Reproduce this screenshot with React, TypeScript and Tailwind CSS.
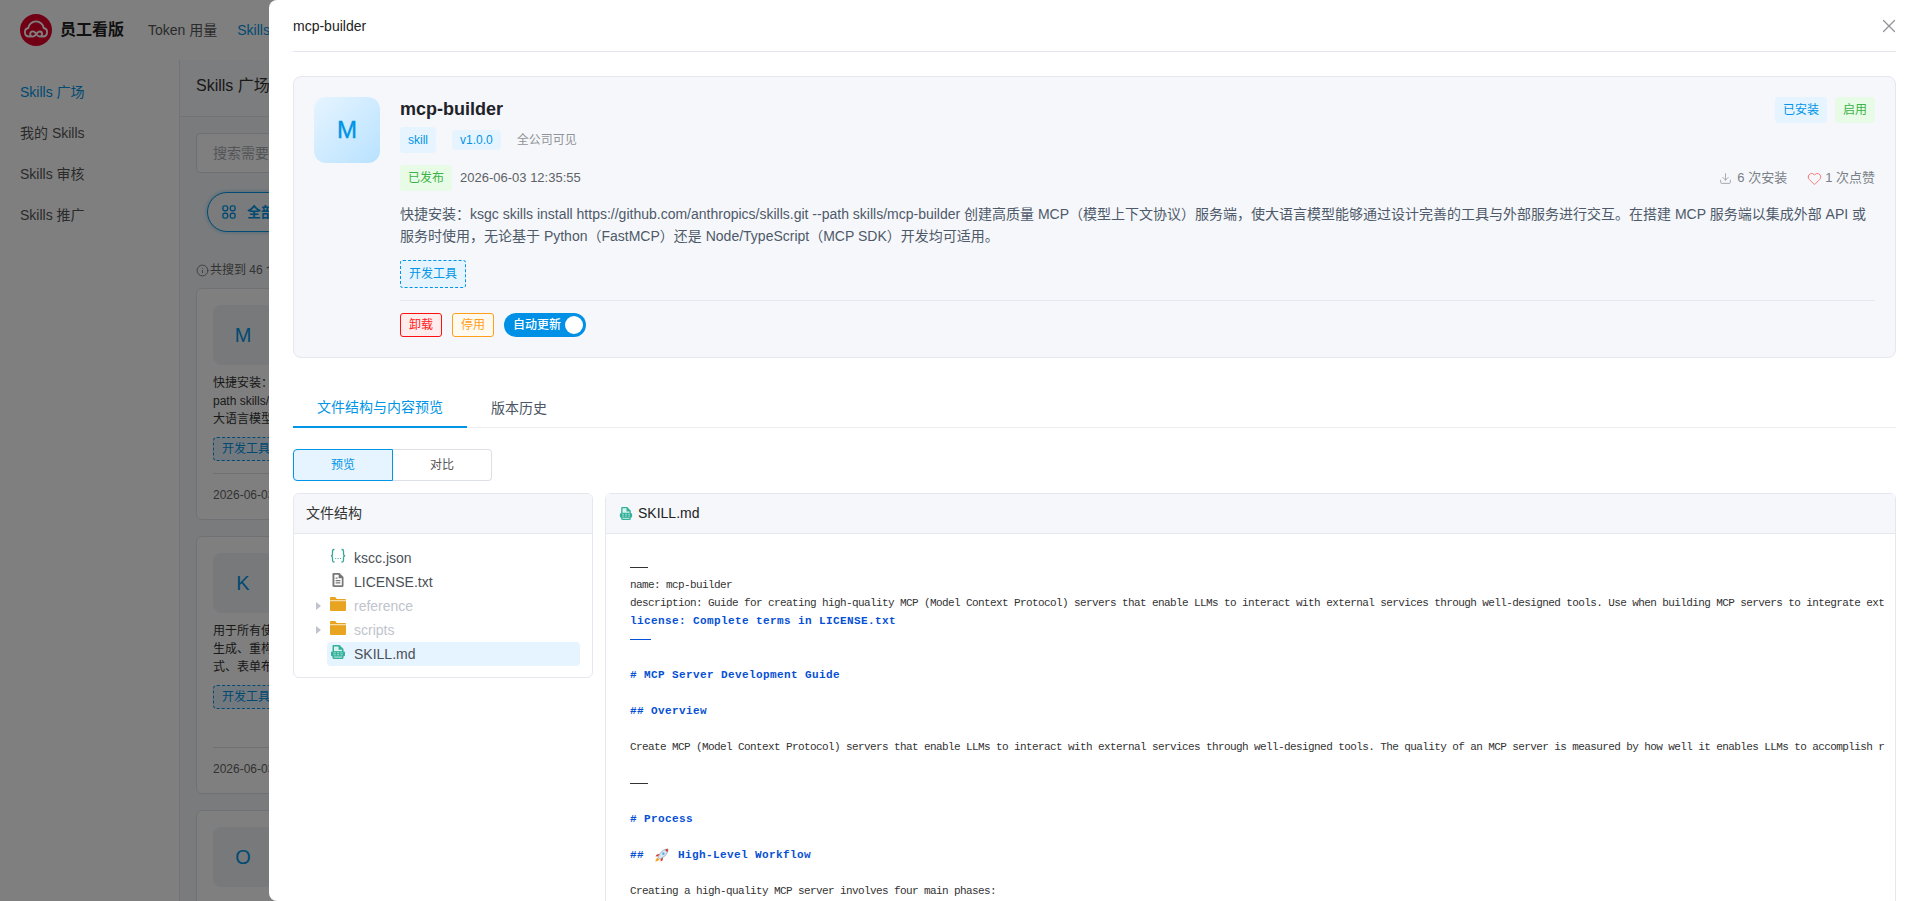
import type { ReactNode } from "react";
import { Download, Heart, Info, X } from "lucide-react";

const fontSans =
  "font-['Liberation_Sans','Noto_Sans_CJK_SC',sans-serif]";

const sideItems = ["Skills 广场", "我的 Skills", "Skills 审核", "Skills 推广"];

// full-width punctuation written as escapes
const summary =
  "快捷安装\uFF1Aksgc skills install https://github.com/anthropics/skills.git --path skills/mcp-builder 创建高质量 MCP\uFF08模型上下文协议\uFF09服务端\uFF0C使大语言模型能够通过设计完善的工具与外部服务进行交互。在搭建 MCP 服务端以集成外部 API 或服务时使用\uFF0C无论基于 Python\uFF08FastMCP\uFF09还是 Node/TypeScript\uFF08MCP SDK\uFF09开发均可适用。";

const codeLines: { text: string; bold?: boolean; rocket?: boolean }[] = [
  { text: "---" },
  { text: "name: mcp-builder" },
  {
    text: "description: Guide for creating high-quality MCP (Model Context Protocol) servers that enable LLMs to interact with external services through well-designed tools. Use when building MCP servers to integrate ext",
  },
  { text: "license: Complete terms in LICENSE.txt", bold: true },
  { text: "---", bold: true },
  { text: "" },
  { text: "# MCP Server Development Guide", bold: true },
  { text: "" },
  { text: "## Overview", bold: true },
  { text: "" },
  {
    text: "Create MCP (Model Context Protocol) servers that enable LLMs to interact with external services through well-designed tools. The quality of an MCP server is measured by how well it enables LLMs to accomplish r",
  },
  { text: "" },
  { text: "---" },
  { text: "" },
  { text: "# Process", bold: true },
  { text: "" },
  { text: "High-Level Workflow", bold: true, rocket: true },
  { text: "" },
  { text: "Creating a high-quality MCP server involves four main phases:" },
];

function Logo() {
  return (
    <svg viewBox="0 0 32 32" className="w-8 h-8 shrink-0">
      <circle cx="16" cy="16" r="16" fill="#e4002b" />
      <g fill="none" stroke="#fff" strokeWidth="1.8" strokeLinecap="round">
        <path d="M10.5 22.5H9a4.3 4.3 0 0 1-.7-8.5 7.8 7.8 0 0 1 15.4 0 4.3 4.3 0 0 1-.7 8.5h-1.5" />
        <path d="M16 19.4c-1-1.2-2-2-3.2-2a2.6 2.6 0 0 0 0 5.2c1.4 0 2.4-1.2 3.4-2.5s2-2.6 3.4-2.6a2.5 2.5 0 0 1 0 5c-1.2 0-2.2-.8-3.1-1.8" />
      </g>
    </svg>
  );
}

function GridIcon() {
  return (
    <svg viewBox="0 0 16 16" className="w-[14px] h-[14px] shrink-0" fill="none" stroke="currentColor" strokeWidth="1.6">
      <rect x="1" y="1" width="5.5" height="5.5" rx="2" />
      <rect x="9.5" y="1" width="5.5" height="5.5" rx="2" />
      <rect x="1" y="9.5" width="5.5" height="5.5" rx="2" />
      <rect x="9.5" y="9.5" width="5.5" height="5.5" rx="2" />
    </svg>
  );
}

function JsonIcon() {
  return (
    <svg viewBox="0 0 16 16" className="w-4 h-4 shrink-0 mb-[4px]" fill="none" stroke="#35a796" strokeWidth="1.3">
      <path d="M4.5 1.5H4C3 1.5 2.5 2 2.5 3v3.2C2.5 7.2 2 7.6 1 7.8c1 .2 1.5.6 1.5 1.6V12.5c0 1 .5 1.5 1.5 1.5h.5" />
      <path d="M11.5 1.5h.5c1 0 1.5.5 1.5 1.5v3.2c0 1 .5 1.4 1.5 1.6-1 .2-1.5.6-1.5 1.6v3.1c0 1-.5 1.5-1.5 1.5h-.5" />
      <path d="M5.2 10.5h1M7.6 10.5h1M10 10.5h1" strokeWidth="1.2" />
    </svg>
  );
}

function TextFileIcon() {
  return (
    <svg viewBox="0 0 16 16" className="w-4 h-4 shrink-0 mb-[5px]">
      <path d="M3.5 1h6L13.5 5v8.5A1.5 1.5 0 0 1 12 15H4a1.5 1.5 0 0 1-1.5-1.5V2A1 1 0 0 1 3.5 1z" fill="#777" />
      <path d="M4.4 2.8h4.2v3.4h3.2v7H4.4z" fill="#fff" />
      <path d="M5.6 8h4.8v1.2H5.6zM5.6 10.3h4.8v1.2H5.6zM5.6 5.6h2v1.2h-2z" fill="#777" />
    </svg>
  );
}

function MdIcon({ size = "w-4 h-4" }: { size?: string }) {
  return (
    <svg viewBox="0 0 16 16" preserveAspectRatio="none" className={`${size} shrink-0`}>
      <path d="M3.5 1h6L13.5 5v8.5A1.5 1.5 0 0 1 12 15H4a1.5 1.5 0 0 1-1.5-1.5V2A1 1 0 0 1 3.5 1z" fill="#35b09a" />
      <path d="M4 2.4h4.6v3.4H12v1.4H4zM4 12.6h8v.9H4z" fill="#d9f3ee" />
      <rect x="1" y="7.6" width="14" height="4.6" rx="1" fill="#35b09a" />
      <path d="M3.4 8.8h2.4M7 8.8h2.2M10.4 8.8h2.2M3.4 10.8h2.4M7 10.8h2.2M10.4 10.8h2.2" stroke="#bfeee5" strokeWidth=".8" />
    </svg>
  );
}

function FolderIcon() {
  return (
    <svg viewBox="0 0 16 14" className="w-4 h-[14px] shrink-0 mb-[5px]">
      <path d="M0 1a1 1 0 0 1 1-1h4.2l1.6 2H15a1 1 0 0 1 1 1v10a1 1 0 0 1-1 1H1a1 1 0 0 1-1-1z" fill="#e8a320" />
      <path d="M0 3h16v1.2H0z" fill="#f6dca6" />
    </svg>
  );
}

function Rocket() {
  return (
    <span className="inline-flex w-5 justify-center align-middle">
      <svg viewBox="0 0 16 16" className="w-[15px] h-[15px]">
        <path d="M15 1c-4 .2-7 2-9 5.4L4.2 9.8l2 2 3.4-1.8C13 8 14.8 5 15 1z" fill="#d5e6f2" stroke="#6d8fa8" strokeWidth=".6" />
        <path d="M15 1c-1.3.1-2.4.3-3.4.8l2.6 2.6c.5-1 .7-2.1.8-3.4z" fill="#d8342c" />
        <circle cx="10" cy="6" r="1.2" fill="#4aa3d8" />
        <path d="M6 6.4 3 6.8 1.6 9l2.6-.2zM9.6 10l-.4 3-2.2 1.4.2-2.6z" fill="#d8342c" />
        <path d="M4 10.4c-1.4.4-2.2 1.6-2.5 4 2.4-.3 3.6-1.1 4-2.5z" fill="#f4a62a" />
      </svg>
    </span>
  );
}

function BgCard({ letter, lines, height }: { letter: string; lines: string[]; height: string }) {
  return (
    <div className={`${height} w-[500px] shrink-0 flex flex-col rounded-md border border-[#dfe3ea] bg-white p-4 pb-0`}>
      <div className="w-[60px] h-[60px] shrink-0 rounded-lg bg-[#f0f2f5] flex items-center justify-center text-[20px] text-[#0095e6]">
        {letter}
      </div>
      {lines.length > 0 && (
        <>
          <div className="mt-[9px] text-[12px] leading-[18px] text-[#333]">
            {lines.map((l) => (
              <div key={l}>{l}</div>
            ))}
          </div>
          <div className="mt-[9px] self-start flex h-6 items-center rounded border border-dashed border-[#0095e6] bg-[#e6f4ff] px-2 text-[12px] text-[#0095e6]">
            开发工具
          </div>
          <div className="mt-auto h-[46px] border-t border-[#dfe3ea] flex items-center pb-1 text-[12px] text-[#666]">
            2026-06-03
          </div>
        </>
      )}
    </div>
  );
}

function BackgroundPage() {
  return (
    <div className="h-full flex flex-col bg-white">
      <header className="h-[60px] shrink-0 flex items-center bg-white px-5 shadow-[0_1px_4px_rgba(0,0,0,0.08)]">
        <Logo />
        <span className="ml-2 text-[16px] font-bold text-[#222]">员工看版</span>
        <span className="ml-[24px] text-[14px] text-[#555]">Token 用量</span>
        <span className="ml-[20px] text-[14px] text-[#0095e6]">Skills</span>
      </header>
      <div className="flex flex-1 min-h-0">
        <aside className="w-[180px] shrink-0 border-r border-[#e4e7ed] bg-white pt-3 pl-5">
          {sideItems.map((item, i) => (
            <div key={item} className={`h-[41px] flex items-center text-[14px] ${i === 0 ? "text-[#0095e6]" : "text-[#555]"}`}>
              {item}
            </div>
          ))}
        </aside>
        <main className="flex-1 bg-[#f5f7fa] overflow-hidden">
          <div className="h-[57px] border-b border-[#e4e7ed] flex items-center pl-4 pb-1 text-[16px] text-[#333] bg-white/40">
            Skills 广场
          </div>
          <div className="px-4 pt-4">
            <div className="h-10 w-[300px] rounded border border-[#dcdfe6] bg-white flex items-center pl-4 text-[14px] text-[#a8abb2]">
              搜索需要
            </div>
            <div className="mt-[19px] ml-[11px] h-10 w-[200px] rounded-full border border-[#0095e6] bg-[#f5f7fa] flex items-center gap-[11px] pl-[14px] text-[14px] font-bold text-[#0095e6] shadow-[0_0_4px_rgba(0,149,230,0.4)]">
              <GridIcon />
              全部
            </div>
            <div className="mt-[29px] flex items-center gap-[1px] text-[12px] text-[#666]">
              <Info size={13} strokeWidth={1.5} />
              共搜到 46 个
            </div>
            <div className="mt-[9px] flex flex-col gap-4">
              <BgCard letter="M" height="h-[232px]" lines={["快捷安装\uFF1A", "path skills/", "大语言模型"]} />
              <BgCard letter="K" height="h-[258px]" lines={["用于所有使用", "生成、重构", "式、表单布局"]} />
              <BgCard letter="O" height="h-[232px]" lines={[]} />
            </div>
          </div>
        </main>
      </div>
    </div>
  );
}

function Badge({ className, children }: { className: string; children: ReactNode }) {
  return (
    <span className={`inline-flex items-center justify-center rounded px-2 text-[12px] ${className}`}>
      {children}
    </span>
  );
}

function SkillCard() {
  return (
    <section className="h-[282px] rounded-lg border border-[#e4e7ed] bg-[#f5f7fa] p-5 flex gap-5">
      <div className="w-[66px] h-[66px] shrink-0 rounded-xl bg-gradient-to-br from-[#e6f4ff] to-[#b8e2ff] flex items-center justify-center text-[24px] text-[#0095e6] [-webkit-text-stroke:0.4px_#0095e6]">
        M
      </div>
      <div className="flex-1 min-w-0">
        <div className="flex justify-between">
          <div>
            <h2 className="h-6 text-[18px] leading-6 font-bold text-[#1f2329]">mcp-builder</h2>
            <div className="mt-1.5 flex items-center gap-4 h-[26px]">
              <Badge className="h-[26px] bg-[#e6f4ff] text-[#0095e6]">skill</Badge>
              <Badge className="h-5 bg-[#e6f4ff] text-[#0095e6]">v1.0.0</Badge>
              <span className="text-[12px] text-[#909399]">全公司可见</span>
            </div>
          </div>
          <div className="flex gap-2 h-[26px]">
            <Badge className="bg-[#e6f4ff] text-[#0095e6]">已安装</Badge>
            <Badge className="bg-[#e8fbe6] text-[#3bb346]">启用</Badge>
          </div>
        </div>
        <div className="mt-3 flex items-center justify-between h-[26px]">
          <div className="flex items-center gap-2">
            <Badge className="h-[26px] bg-[#e8fbe6] text-[#3bb346]">已发布</Badge>
            <span className="text-[13px] text-[#606266]">2026-06-03 12:35:55</span>
          </div>
          <div className="flex items-center gap-5 text-[13px] text-[#7a7f87]">
            <span className="flex items-center gap-[5px]">
              <Download size={13} strokeWidth={1.4} className="text-[#909399]" />6 次安装
            </span>
            <span className="flex items-center gap-[3px]">
              <Heart size={15} strokeWidth={1.4} className="text-[#f56c6c]" />1 次点赞
            </span>
          </div>
        </div>
        <p className="mt-3 text-[14px] leading-[22px] text-[#4e5969]">{summary}</p>
        <div className="mt-[13px] inline-flex h-7 items-center rounded-[3px] border border-dashed border-[#0095e6] bg-[#e6f4ff] px-2 text-[12px] text-[#0095e6]">
          开发工具
        </div>
        <div className="mt-3 border-t border-[#e4e7ed] pt-3 flex items-center gap-2.5">
          <button className="h-6 w-[42px] rounded-[3px] border border-[#ff0f0f] bg-[#ffecec] text-[12px] text-[#ff2020]">卸载</button>
          <button className="h-6 w-[42px] rounded-[3px] border border-[#ff9f1a] bg-[#fffaf0] text-[12px] text-[#ff9f1a]">停用</button>
          <div className="h-6 w-[82px] rounded-full bg-[#0090e6] flex items-center pl-[9px] gap-1 text-[12px] font-medium text-white">
            自动更新
            <span className="w-[18px] h-[18px] rounded-full bg-white" />
          </div>
        </div>
      </div>
    </section>
  );
}

function FileRow({ icon, name, caret, muted, selected }: { icon: ReactNode; name: string; caret?: boolean; muted?: boolean; selected?: boolean }) {
  return (
    <div className="h-6 flex items-center">
      <span className="w-[21px] shrink-0 flex justify-end pr-[6px]">
        {caret && <span className="border-y-[4px] border-l-[5px] border-y-transparent border-l-[#c0c4cc]" />}
      </span>
      <div className={`flex-1 h-6 flex items-center gap-2 rounded pl-[3px] text-[14px] ${selected ? "bg-[#e6f4ff]" : ""} ${muted ? "text-[#c0c4cc]" : "text-[#4b5058]"}`}>
        {icon}
        {name}
      </div>
    </div>
  );
}

function CodeView() {
  return (
    <div className="px-6 pt-6 overflow-hidden font-['Liberation_Mono',monospace] text-[11px] leading-[18px]">
      {codeLines.map((line, i) => {
        const rule = line.text === "---";
        const tone = line.bold
          ? "font-bold text-[#0550d4] decoration-[#0550d4] tracking-[0.4px]"
          : "text-[#333] decoration-[#333] tracking-[-0.6px]";
        return (
          <div
            key={i}
            className={`h-[18px] whitespace-pre ${tone} ${rule ? "!text-transparent line-through decoration-1" : ""}`}
          >
            {line.rocket ? (
              <>
                {"## "}
                <Rocket />
                {" "}
                {line.text}
              </>
            ) : (
              line.text
            )}
          </div>
        );
      })}
    </div>
  );
}

export default function App() {
  return (
    <div className={`relative h-screen overflow-hidden ${fontSans}`}>
      <BackgroundPage />
      <div className="absolute inset-0 bg-black/50" />
      <div className="absolute top-0 right-0 bottom-0 w-[1651px] rounded-l-lg bg-white px-6 overflow-hidden">
        <div className="h-[52px] border-b border-[#e4e7ed] flex items-center justify-between pt-[1px] text-[14px] text-[#222]">
          mcp-builder
          <X size={22} strokeWidth={1.3} className="text-[#909399] -mr-[4px] -mt-[1px]" />
        </div>
        <div className="mt-6">
          <SkillCard />
        </div>
        <div className="mt-[30px] flex h-10 border-b border-[#eceef2] text-[14px]">
          <div className="h-10 px-6 flex items-center border-b-2 border-[#0095e6] text-[#0095e6]">文件结构与内容预览</div>
          <div className="h-10 px-6 flex items-center text-[#4b5563]">版本历史</div>
        </div>
        <div className="mt-[21px] flex h-8 w-[199px] text-[12px]">
          <div className="w-[100px] rounded-l border border-[#0095e6] bg-[#e6f4ff] text-[#0095e6] flex items-center justify-center">预览</div>
          <div className="flex-1 rounded-r border border-l-0 border-[#dcdfe6] text-[#555] flex items-center justify-center">对比</div>
        </div>
        <div className="mt-3 flex gap-3 items-start">
          <div className="w-[300px] shrink-0 h-[185px] rounded-md border border-[#e4e7ed] overflow-hidden">
            <div className="h-10 bg-[#f5f7fa] border-b border-[#e4e7ed] flex items-center pl-3 text-[14px] text-[#333]">文件结构</div>
            <div className="pt-[12px] pl-3 pr-3">
              <FileRow icon={<JsonIcon />} name="kscc.json" />
              <FileRow icon={<TextFileIcon />} name="LICENSE.txt" />
              <FileRow icon={<FolderIcon />} name="reference" caret muted />
              <FileRow icon={<FolderIcon />} name="scripts" caret muted />
              <FileRow icon={<MdIcon size="w-4 h-4 mb-[4px]" />} name="SKILL.md" selected />
            </div>
          </div>
          <div className="flex-1 min-w-0 h-[600px] rounded-md border border-[#e4e7ed]">
            <div className="h-10 bg-[#f5f7fa] border-b border-[#e4e7ed] flex items-center pl-[13px] gap-[5px] text-[14px] text-[#222]">
              <MdIcon size="w-[14px] h-[15px]" />
              SKILL.md
            </div>
            <CodeView />
          </div>
        </div>
      </div>
    </div>
  );
}
